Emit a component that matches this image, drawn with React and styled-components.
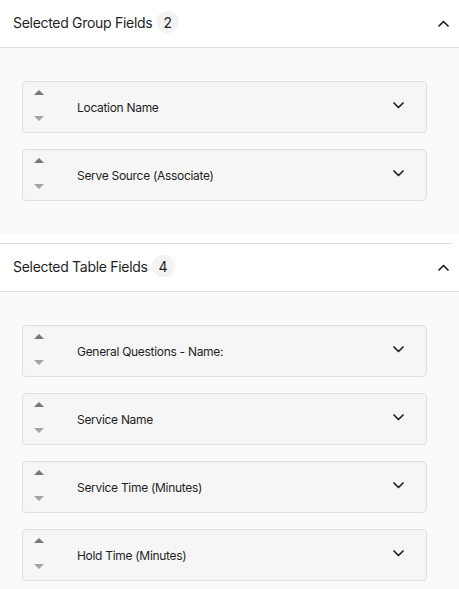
import React from "react";
import styled, { createGlobalStyle } from "styled-components";

const GlobalStyle = createGlobalStyle`
  html, body {
    margin: 0;
    padding: 0;
    background: #ffffff;
  }
  body {
    font-family: Inter, "Noto Sans", "Liberation Sans", sans-serif;
    color: #222;
  }
`;

const groupFields = ["Location Name", "Serve Source (Associate)"];
const tableFields = [
  "General Questions - Name:",
  "Service Name",
  "Service Time (Minutes)",
  "Hold Time (Minutes)",
];

const ChevronDown = () => (
  <svg width="11" height="7" viewBox="0 0 11 7" fill="none">
    <polyline
      points="1,1 5.5,5.5 10,1"
      stroke="#1f2328"
      strokeWidth="1.7"
      strokeLinecap="round"
      strokeLinejoin="round"
    />
  </svg>
);

const ChevronUp = () => (
  <svg width="11" height="7" viewBox="0 0 11 7" fill="none">
    <polyline
      points="1,6 5.5,1.5 10,6"
      stroke="#1f2328"
      strokeWidth="1.7"
      strokeLinecap="round"
      strokeLinejoin="round"
    />
  </svg>
);

const FieldCard = ({ label }) => (
  <Card>
    <Arrows>
      <TriUp />
      <TriDown />
    </Arrows>
    <Label>{label}</Label>
    <Toggle>
      <ChevronDown />
    </Toggle>
  </Card>
);

const Section = ({ title, fields, divider }) => (
  <>
    {divider && <Divider />}
    <Header>
      <Title>{title}</Title>
      <Badge>{fields.length}</Badge>
      <HeaderToggle>
        <ChevronUp />
      </HeaderToggle>
    </Header>
    <Body>
      {fields.map((f) => (
        <FieldCard key={f} label={f} />
      ))}
    </Body>
  </>
);

const App = () => {
  return (
    <Page>
      <GlobalStyle />
      <Section title="Selected Group Fields" fields={groupFields} />
      <Section title="Selected Table Fields" fields={tableFields} divider />
    </Page>
  );
};

export default App;

const Page = styled.div`
  width: 459px;
`;

const Divider = styled.div`
  height: 1px;
  width: 452px;
  background: #dedede;
  margin-top: 9px;
`;

const Header = styled.div`
  display: flex;
  align-items: center;
  height: 47px;
  padding: 0 10px 0 13px;
  border-bottom: 1px solid #dedede;
  background: #fff;
`;

const Title = styled.span`
  font-size: 14px;
  color: #1f1f1f;
  letter-spacing: -0.3px;
  margin-bottom: 3px;
`;

const Badge = styled.span`
  display: inline-flex;
  align-items: center;
  justify-content: center;
  min-width: 23px;
  height: 22px;
  margin-left: 4px;
  margin-bottom: 3px;
  border-radius: 11px;
  background: #f3f3f3;
  font-size: 14px;
  color: #1f1f1f;
`;

const HeaderToggle = styled.span`
  display: flex;
  margin-left: auto;
`;

const Body = styled.div`
  display: flex;
  flex-direction: column;
  gap: 16px;
  padding: 33px 32px 33px 22px;
  background: #f9fafa;
`;

const Card = styled.div`
  display: flex;
  align-items: center;
  height: 50px;
  border: 1px solid #dfdfdf;
  border-radius: 4px;
  background: #f6f6f6;
`;

const Arrows = styled.div`
  display: flex;
  flex-direction: column;
  justify-content: space-between;
  align-self: stretch;
  padding: 8px 0 11px 11px;
  margin-right: 33px;
`;

const TriUp = styled.span`
  width: 0;
  height: 0;
  border-left: 5px solid transparent;
  border-right: 5px solid transparent;
  border-bottom: 5px solid #777;
`;

const TriDown = styled.span`
  width: 0;
  height: 0;
  border-left: 5px solid transparent;
  border-right: 5px solid transparent;
  border-top: 5px solid #a3a3a3;
`;

const Label = styled.span`
  font-size: 12px;
  color: #1f1f1f;
  letter-spacing: -0.3px;
`;

const Toggle = styled.span`
  display: flex;
  margin-left: auto;
  margin-right: 22px;
  margin-bottom: 3px;
`;
